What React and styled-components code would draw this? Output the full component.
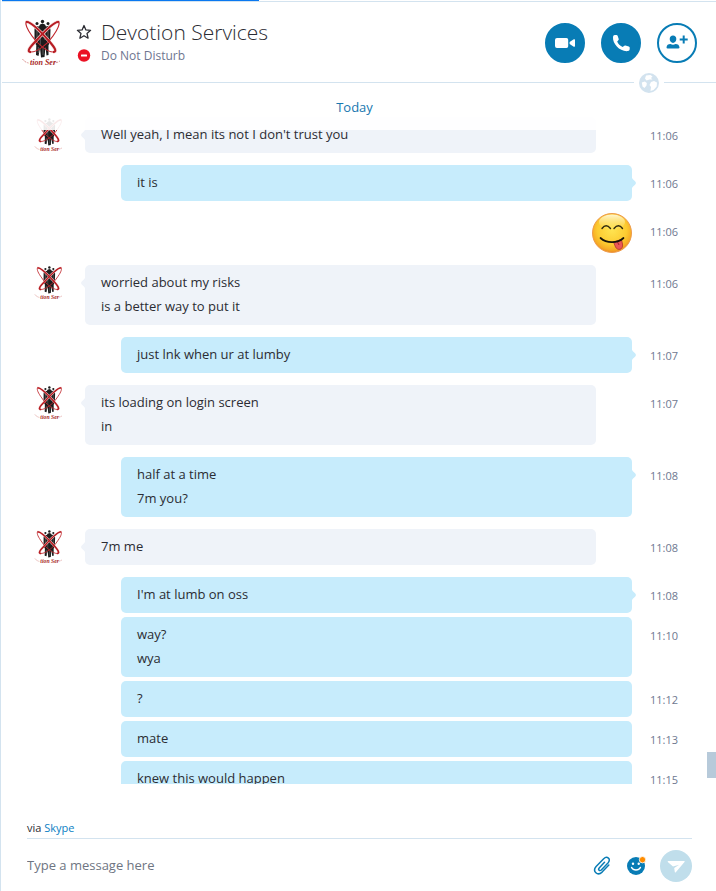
import React, { useState } from 'react';
import styled, { createGlobalStyle } from 'styled-components';

const GlobalStyle = createGlobalStyle`
  * {
    box-sizing: border-box;
  }
  body {
    margin: 0;
    background: #fff;
    color: #2b2c33;
    font-family: 'Open Sans', 'Noto Sans', sans-serif;
    font-size: 13px;
  }
  button {
    padding: 0;
    border: 0;
    background: none;
    cursor: pointer;
  }
  svg {
    display: block;
  }
`;

const groups = [
  { id: 1, from: 'them', time: '11:06', lines: ["Well yeah, I mean its not I don't trust you"] },
  { id: 2, from: 'me', time: '11:06', lines: ['it is'] },
  { id: 3, from: 'me', time: '11:06', emoji: true },
  { id: 4, from: 'them', time: '11:06', lines: ['worried about my risks', 'is a better way to put it'] },
  { id: 5, from: 'me', time: '11:07', lines: ['just lnk when ur at lumby'] },
  { id: 6, from: 'them', time: '11:07', lines: ['its loading on login screen', 'in'] },
  { id: 7, from: 'me', time: '11:08', lines: ['half at a time', '7m you?'] },
  { id: 8, from: 'them', time: '11:08', lines: ['7m me'] },
  { id: 9, from: 'me', time: '11:08', lines: ["I'm at lumb on oss"] },
  { id: 10, from: 'me', time: '11:10', lines: ['way?', 'wya'], continued: true },
  { id: 11, from: 'me', time: '11:12', lines: ['?'], continued: true },
  { id: 12, from: 'me', time: '11:13', lines: ['mate'], continued: true },
  { id: 13, from: 'me', time: '11:15', lines: ['knew this would happen'], continued: true },
];

const Window = styled.div`
  display: flex;
  flex-direction: column;
  height: 100vh;
  border-left: 1px solid #d3e3ef;
`;

const LoadingTrack = styled.div`
  flex: none;
  height: 2px;
  margin-left: 1px;
  border-bottom: 1px solid #d3e3ef;
`;

const LoadingBar = styled.div`
  height: 1px;
  background: #0a78f0;
`;

const Header = styled.header`
  position: relative;
  display: flex;
  align-items: center;
  flex: none;
  height: 81px;
  margin-left: 1px;
  padding: 2px 19px 0 20px;
  border-bottom: 1px solid #d3e3ef;
`;

const Contact = styled.div`
  display: grid;
  grid-template-columns: 16px 1fr;
  align-items: center;
  column-gap: 9px;
  flex: 1;
  min-width: 0;
  margin-left: 14px;
  padding-bottom: 2px;
`;

const Name = styled.h1`
  margin: 0;
  font-size: 21px;
  font-weight: 300;
  line-height: 28px;
`;

const Status = styled.span`
  color: #6e7590;
  font-size: 12px;
  line-height: 20px;
`;

const Actions = styled.div`
  display: flex;
  gap: 16px;
`;

const RoundButton = styled.button`
  display: grid;
  place-items: center;
  width: 40px;
  height: 40px;
  border: 2px solid #087cb5;
  border-radius: 50%;
  background: ${({ $outline }) => ($outline ? '#fff' : '#087cb5')};
  color: ${({ $outline }) => ($outline ? '#087cb5' : '#fff')};
`;

const GlobeBadge = styled.span`
  position: absolute;
  right: 52px;
  bottom: -11px;
  z-index: 2;
  padding: 0 5px;
  background: #fff;
`;

const Log = styled.main`
  position: relative;
  flex: 1;
  min-height: 0;
  overflow: hidden;
`;

const DayLabel = styled.div`
  position: absolute;
  top: 0;
  left: 0;
  right: 0;
  z-index: 1;
  padding: 2px 8px 0 0;
  background: rgba(255, 255, 255, 0.9);
  color: #1877b0;
  line-height: 45px;
  text-align: center;
`;

const MessageList = styled.ol`
  margin: 0;
  padding: 22px 0 0;
  list-style: none;
`;

const Row = styled.li`
  display: grid;
  grid-template-columns: 84px 1fr 84px;
  margin-top: ${({ $continued }) => ($continued ? 4 : 12)}px;
`;

const AvatarCell = styled.div`
  padding-left: 32px;
`;

const Bubble = styled.div`
  position: relative;
  margin: ${({ $mine }) => ($mine ? '0 0 0 36px' : '0 36px 0 0')};
  padding: 5px 16px 7px;
  border-radius: 5px;
  background: ${({ $mine }) => ($mine ? '#c7ecfc' : '#eff3f9')};
`;

const Tail = styled.svg`
  position: absolute;
  top: 11px;
  ${({ $mine }) => ($mine ? 'right: -5px;' : 'left: -5px; transform: scaleX(-1);')}
  fill: ${({ $mine }) => ($mine ? '#c7ecfc' : '#eff3f9')};
`;

const Line = styled.p`
  margin: 0;
  line-height: 24px;
`;

const EmojiCell = styled.div`
  display: flex;
  justify-content: flex-end;
`;

const Time = styled.time`
  padding-left: 18px;
  color: #6e7890;
  font-size: 11px;
  line-height: 38px;
  height: 36px;
`;

const ScrollThumb = styled.div`
  position: absolute;
  right: 0;
  bottom: 6px;
  width: 9px;
  height: 26px;
  background: #b7cada;
`;

const Footer = styled.footer`
  flex: none;
  margin: 0 24px 0 26px;
  padding-top: 34px;
`;

const Via = styled.div`
  padding-bottom: 1px;
  border-bottom: 1px solid #d3e3ef;
  font-size: 11px;
  line-height: 19px;

  a {
    color: #0b7fc4;
    text-decoration: none;
  }
`;

const Composer = styled.form`
  display: flex;
  align-items: center;
  height: 52px;
  padding-top: 2px;
`;

const MessageInput = styled.input`
  flex: 1;
  min-width: 0;
  padding: 0 0 2px;
  border: 0;
  outline: 0;
  color: #2b2c33;
  font: inherit;

  &::placeholder {
    color: #6e7582;
    opacity: 1;
  }
`;

const ToolButton = styled.button`
  display: grid;
  place-items: center;
  width: 20px;
  height: 20px;
  margin-right: 14px;
  color: #087cb5;
`;

const SendButton = styled.button`
  display: grid;
  place-items: center;
  width: 32px;
  height: 32px;
  border-radius: 50%;
  background: #c0deeb;
`;

const DevotionLogo = ({ width, height }) => (
  <svg width={width} height={height} viewBox="0 0 40 50" role="img" aria-label="Devotion Services">
    <g fill="#1c1c1c">
      <circle cx="20.5" cy="3.5" r="1.7" />
      <circle cx="15" cy="5.5" r="1.5" />
      <circle cx="26" cy="5.5" r="1.5" />
      <path d="M18 6.5 20.5 5.5 23 6.5 24 8.5 27.500 7.500 28.500 12 28 25 26.500 27 26.500 37 24.500 37.500 23.500 29 22.500 39 19 39.500 18 30 16.500 38 14 37 14.300 27 12.500 25 12.500 11 13.500 8 17 8.500z" />
    </g>
    <path d="M15 11v13M18.300 12v16M23 11v11M26 13v9M16.300 29v6M21 30v7" fill="none" stroke="#999" strokeWidth="0.5" />
    {/* the two crossed rings, each on a pale rim so they stand off the figures */}
    <g fill="none">
      <path d="M4 4C8 3 19 14 27 23 34 31 35 34 31 34M37 4C33 3 22 14 14 23 6 31 5 34 9 34" stroke="#f0c9c9" strokeWidth="3.2" />
      <path d="M4 4C8 3 19 14 27 23 34 31 35 34 31 34 26 34 16 27 10 18 5 11 3 7 4 4z" stroke="#c0272d" strokeWidth="1.2" />
      <path d="M37 4C33 3 22 14 14 23 6 31 5 34 9 34 15 34 25 27 31 18 36 11 38 7 37 4z" stroke="#c0272d" strokeWidth="1.2" />
      <path d="M4 4C8 3 19 14 27 23 34 31 35 34 31 34M37 4C33 3 22 14 14 23 6 31 5 34 9 34" stroke="#b71d23" strokeWidth="1.9" />
    </g>
    <path d="M.5 41q2 3 6 4M31 45q4 0 7-2" fill="none" stroke="#c9605c" strokeWidth="0.7" strokeDasharray="2 1" />
    <text x="8" y="47" fill="#a92a27" fontFamily="Liberation Serif, serif" fontSize="8" fontStyle="italic" fontWeight="700">
      tion Ser
    </text>
  </svg>
);

const StarIcon = () => (
  <svg width="16" height="16" viewBox="0 0 16 16" fill="none" stroke="#2b2c33" strokeWidth="1.3" strokeLinejoin="round">
    <path d="M8 1.5 9.900 5.900 14.600 6.300 11 9.400 12.100 14.200 8 11.700 3.900 14.200 5 9.400 1.400 6.300 6.100 5.900z" />
  </svg>
);

const DoNotDisturbIcon = () => (
  <svg width="16" height="16" viewBox="0 0 16 16">
    <circle cx="8" cy="7.5" r="6.2" fill="#eb1124" />
    <rect x="5" y="6.5" width="6" height="2" rx="0.5" fill="#fff" />
  </svg>
);

const VideoIcon = () => (
  <svg width="20" height="20" viewBox="0 0 20 20" fill="currentColor">
    <path d="M2 5h9.500q1.700 0 1.700 1.700v6.600q0 1.700-1.700 1.700H2Q0 15 0 13V7Q0 5 2 5z" />
    <path d="M14.600 9 18.800 6.300q1.200-.5 1.200.6v6.200q0 1.100-1.200.6L14.600 11z" />
  </svg>
);

const PhoneIcon = () => (
  <svg width="20" height="20" viewBox="0 0 20 20" fill="currentColor">
    <path d="M3.700 2 5.400 1.900q1 0 1.300 1l1 3q.2.800-.4 1.400L6.200 8.400c.8 2.300 2.900 4.500 5.600 5.500l1.100-1q.7-.6 1.500-.4l3.400.9q.9.300.9 1.200v1.600q-.1 1.600-1.700 1.900C9.200 19.100 1.400 10.800 2 4q.2-1.800 1.700-2z" />
  </svg>
);

const AddPersonIcon = () => (
  <svg width="22" height="20" viewBox="0 0 22 20" fill="currentColor">
    <path d="M7 2.600c2 0 3.300 1.400 3.300 3.500S8.800 10 7 10 3.700 8.300 3.700 6.100 5 2.600 7 2.600z" />
    <path d="M.5 14.500c.2-2.300 1.600-3.400 4-3.400 1.800.8 3.200.8 5 0 2.400 0 3.800 1.100 4 3.400q0 1-1.300 1H1.700q-1.200 0-1.200-1z" />
    <path d="M16.700 2.500h2v3h3v2h-3v3h-2v-3h-3v-2h3z" />
  </svg>
);

const GlobeIcon = () => (
  <svg width="20" height="20" viewBox="0 0 20 20">
    <circle cx="10" cy="10" r="9.1" fill="#d3e3ef" stroke="#d3e3ef" strokeWidth="1.8" />
    <g fill="#fff">
      <path d="M7 2.500 11.500 2l2 1.500-1.500 1.500 1.500 1.500h-3L7.500 7.500 6 5.500z" />
      <path d="m2.800 9.500 3-1 2 1.500-.3 2.500-2 2.500-2-1.500z" />
      <path d="M12 9l3-1 3 1.500-.3 4-3.200 3.500-3 1 .5-4-1.500-2z" />
    </g>
  </svg>
);

const TongueEmoji = () => (
  <svg width="40" height="40" viewBox="0 0 40 40" role="img" aria-label="Cheeky face with tongue out">
    <defs>
      <radialGradient id="face" cx="50%" cy="42%" r="58%">
        <stop offset="0" stopColor="#ffe451" />
        <stop offset="0.65" stopColor="#fccb31" />
        <stop offset="0.88" stopColor="#f6ac25" />
        <stop offset="1" stopColor="#ec8b24" />
      </radialGradient>
      <linearGradient id="shine" x1="0" y1="0" x2="0" y2="1">
        <stop offset="0" stopColor="#fffbe3" stopOpacity="0.9" />
        <stop offset="1" stopColor="#ffe87a" stopOpacity="0.1" />
      </linearGradient>
    </defs>
    <circle cx="20" cy="20" r="19.5" fill="url(#face)" stroke="#ed9b4b" strokeWidth="1" />
    <ellipse cx="20" cy="9" rx="13" ry="7.5" fill="url(#shine)" />
    <path d="M10 15.500q4-5.500 8.500 0M22 15.500q4.500-5.500 8.500 0" fill="none" stroke="#322c10" strokeWidth="1.4" strokeLinecap="round" />
    <path d="m21.500 29 8-2.500 1 4.500c1 6-5 7-7 3z" fill="#ea5757" stroke="#a52a2a" strokeWidth="0.7" />
    <path d="m25.500 29 1.500 3" stroke="#a52a2a" />
    <path d="M8.500 25c6 5.500 17 5.500 23 0" fill="none" stroke="#17130a" strokeWidth="1.7" strokeLinecap="round" />
  </svg>
);

const ClipIcon = () => (
  <svg width="20" height="20" viewBox="0 0 20 20" fill="none" stroke="currentColor" strokeWidth="1.5" strokeLinecap="round" strokeLinejoin="round">
    <path d="m12.500 6.200-5.300 5.700c-1.500 1.700.5 3.700 2.100 2.100l6.900-7.300c3.200-3.700-1.200-7.200-4.500-4L4.100 10.500c-4 4.600 1.400 10 6 5.600l6.700-7.100" />
  </svg>
);

const SmileIcon = () => (
  <svg width="20" height="20" viewBox="0 0 20 20">
    <circle cx="10" cy="10" r="9" fill="currentColor" />
    <g fill="#fff">
      <circle cx="7" cy="7.7" r="1.2" />
      <circle cx="12.7" cy="7.7" r="1.2" />
    </g>
    <path d="M5.600 11.500c1.700 3.400 7.100 3.400 8.800 0" fill="none" stroke="#fff" strokeWidth="1.5" strokeLinecap="round" />
    <circle cx="16.5" cy="3.7" r="3.2" fill="#ff8c00" stroke="#fff" strokeWidth="0.8" />
  </svg>
);

const SendIcon = () => (
  <svg width="20" height="20" viewBox="0 0 20 20" fill="#fff">
    <path d="M2.200 5h16q.9.200.3.900L9.800 16.200q-.8.700-1-.3l-.6-3.900 5-3.200-6.200 1.700L1.800 6q-.4-.8.400-1z" />
  </svg>
);

const Message = ({ from, time, lines, emoji, continued }) => {
  const mine = from === 'me';

  return (
    <Row $continued={continued}>
      <AvatarCell>{!mine && <DevotionLogo width={32} height={36} />}</AvatarCell>
      {emoji ? (
        <EmojiCell>
          <TongueEmoji />
        </EmojiCell>
      ) : (
        <Bubble $mine={mine}>
          {!continued && (
            <Tail $mine={mine} width="6" height="14" viewBox="0 0 6 14">
              <path d="M0 0q1 3 4.300 5.400 1.400 1.600 0 3.200Q1 11 0 14z" />
            </Tail>
          )}
          {lines.map((line) => (
            <Line key={line}>{line}</Line>
          ))}
        </Bubble>
      )}
      <Time>{time}</Time>
    </Row>
  );
};

const App = () => {
  const [draft, setDraft] = useState('');

  const handleSubmit = (event) => {
    event.preventDefault();
    setDraft('');
  };

  return (
    <>
      <GlobalStyle />
      <Window>
        <LoadingTrack>
          <LoadingBar style={{ width: '36%' }} />
        </LoadingTrack>
        <Header>
          <DevotionLogo width={40} height={50} />
          <Contact>
            <button type="button" aria-label="Add to favourites">
              <StarIcon />
            </button>
            <Name>Devotion Services</Name>
            <DoNotDisturbIcon />
            <Status>Do Not Disturb</Status>
          </Contact>
          <Actions>
            <RoundButton type="button" aria-label="Video call">
              <VideoIcon />
            </RoundButton>
            <RoundButton type="button" aria-label="Call">
              <PhoneIcon />
            </RoundButton>
            <RoundButton type="button" aria-label="Add people" $outline>
              <AddPersonIcon />
            </RoundButton>
          </Actions>
          <GlobeBadge>
            <GlobeIcon />
          </GlobeBadge>
        </Header>
        <Log>
          <DayLabel>Today</DayLabel>
          <MessageList>
            {groups.map((group) => (
              <Message key={group.id} {...group} />
            ))}
          </MessageList>
          <ScrollThumb />
        </Log>
        <Footer>
          <Via>
            via <a href="#skype">Skype</a>
          </Via>
          <Composer onSubmit={handleSubmit}>
            <MessageInput
              type="text"
              aria-label="Message"
              placeholder="Type a message here"
              value={draft}
              onChange={(event) => setDraft(event.target.value)}
            />
            <ToolButton type="button" aria-label="Attach a file">
              <ClipIcon />
            </ToolButton>
            <ToolButton type="button" aria-label="Insert emoticon">
              <SmileIcon />
            </ToolButton>
            <SendButton type="submit" aria-label="Send">
              <SendIcon />
            </SendButton>
          </Composer>
        </Footer>
      </Window>
    </>
  );
};

export default App;
